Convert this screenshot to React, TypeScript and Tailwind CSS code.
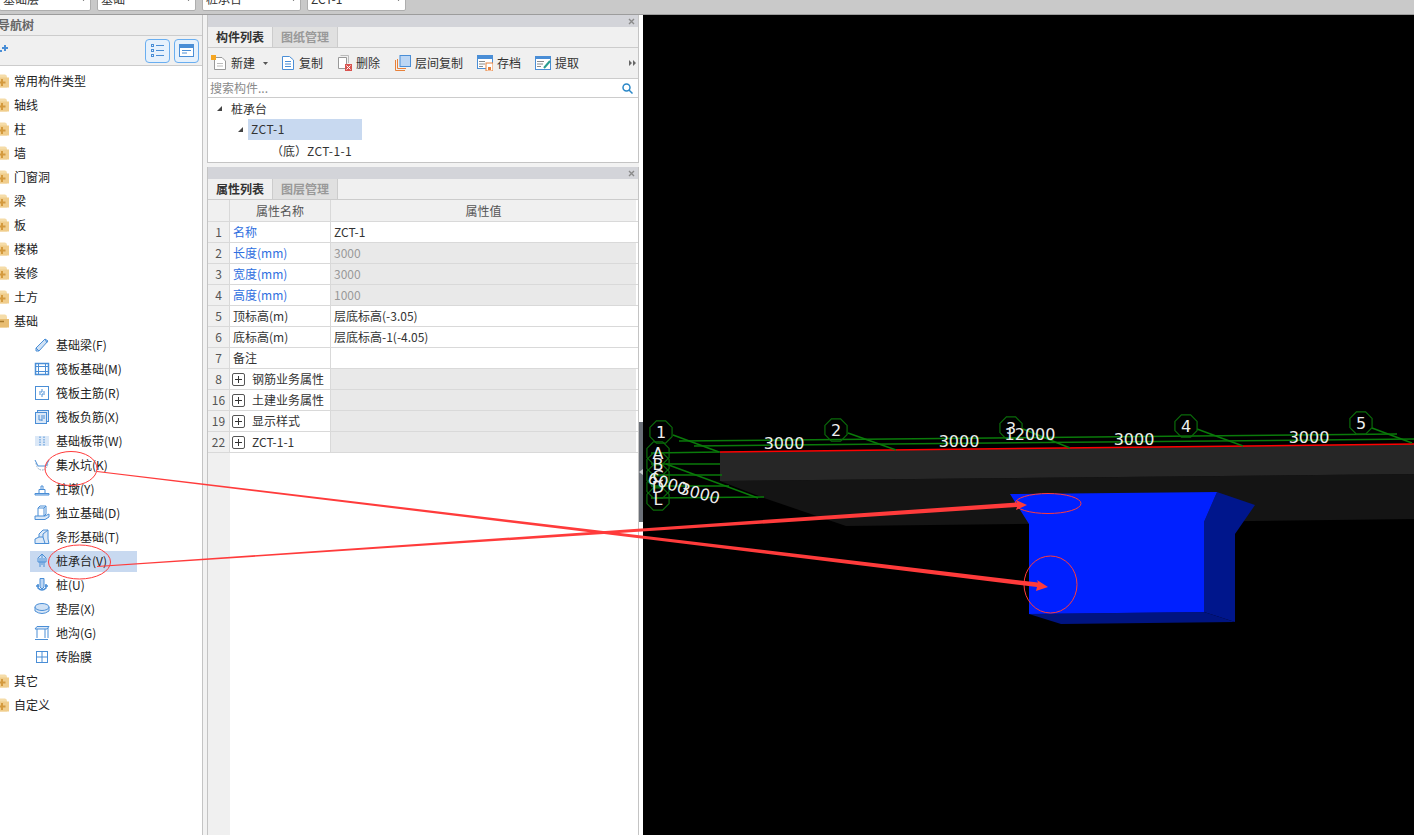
const cnFont = "font-['Noto_Sans_CJK_SC','Noto_Sans',sans-serif]";

function FolderIcon() {
  return (
    <svg width="14" height="14" viewBox="0 0 14 14" className="shrink-0 -ml-[5px]">
      <path d="M1 3 Q1 0.5 3 0.5 H10 Q12 0.5 12 3 V13.5 H1 Z" fill="#f5dca8" />
      <rect x="1" y="3.5" width="13" height="10" fill="#f0cd8c" />
      <path d="M7 5 V12 M3.5 8.5 H10.5" stroke="#d49a3e" strokeWidth="2" />
    </svg>
  );
}

function OpenFolderIcon() {
  return (
    <svg width="14" height="14" viewBox="0 0 14 14" className="shrink-0 -ml-[5px]">
      <path d="M1 3 Q1 0.5 3 0.5 H10 Q12 0.5 12 3 V13.5 H1 Z" fill="#f5dca8" />
      <rect x="1" y="5" width="13" height="8.5" fill="#e8bd72" />
      <path d="M1 7.5 H9" stroke="#a87a2c" strokeWidth="1.5" />
    </svg>
  );
}

const blue = "#4a8ed6";

function ChildIcon({ kind }: { kind: number }) {
  const s = { fill: "none", stroke: blue, strokeWidth: 1 };
  const shapes = [
    <g {...s}>
      <path d="M2 11 L11 2 L14 4 L5 14 L2 14 Z" fill="#cfe1f5" />
      <path d="M2 11 L5 14 M11 2 L13 6" />
    </g>,
    <g {...s}>
      <rect x="1.5" y="2.5" width="13" height="11" strokeWidth="1.5" />
      <rect x="4.5" y="5.5" width="7" height="5" />
      <path d="M1.5 5.5 H14.5 M1.5 10.5 H14.5 M4.5 2.5 V13.5 M11.5 2.5 V13.5" />
    </g>,
    <g {...s}>
      <rect x="1.5" y="1.5" width="13" height="13" />
      <path d="M8 4 V7 H5 M8 12 V9 H11 M5 9 H7 M9 7 H11" />
    </g>,
    <g {...s}>
      <rect x="3.5" y="1.5" width="11" height="11" fill="#dbe8f7" />
      <rect x="1.5" y="3.5" width="11" height="11" fill="#dbe8f7" />
      <path d="M5 6 V11 H8 M8 6 V12 M10 6 V10" />
    </g>,
    <g {...s}>
      <rect x="1" y="3" width="14" height="10" fill="#dbe8f7" stroke="none" />
      <path d="M6 3.5 V12.5 M10 3.5 V12.5" strokeDasharray="1.5 1" />
    </g>,
    <g {...s}>
      <path d="M2 6 Q3 13 8 13 Q13 13 14 6" strokeDasharray="1.5 1" stroke="#8fa9c4" />
      <path d="M1 3 L4 9 H12 L15 3" />
    </g>,
    <g {...s}>
      <path d="M1 12.5 H15 V14 H1 Z" fill="#cfe1f5" />
      <path d="M5 12 V8.5 H11 V12 M7 8 V5 H9 V8" />
    </g>,
    <g {...s}>
      <path d="M1 11 H11 L15 9 V12 L11 14.5 H1 Z" fill="#dbe8f7" />
      <path d="M4 11 V3 L6 1 H12 V9 L10 11 M4 3 H10 V11 M10 3 L12 1" />
    </g>,
    <g {...s}>
      <path d="M1 14.5 V10 L5 8 V5 L9 1 H14 V10 L15 14.5 Z" fill="#dbe8f7" />
      <path d="M5 8 H9 V5 L14 1 M9 8 L11 14.5" />
    </g>,
    <g {...s}>
      <path d="M8 1 L12 5 V9 H4 V5 Z" fill="#cfe1f5" />
      <path d="M6 5 V14 M10 5 V14 M8 1 V12" />
    </g>,
    <g {...s}>
      <path d="M6 1.5 H10 V10 L8 12 L6 10 Z" fill="#bcd6f4" />
      <path d="M2 9 H5 M11 9 H14 M4 7 V11 Q8 15 12 11 V7" strokeWidth="1.5" />
    </g>,
    <g {...s}>
      <path d="M1 6 V10 Q8 15 15 10 V6" fill="#dbe8f7" />
      <ellipse cx="8" cy="6" rx="7" ry="3.5" fill="#cfe1f5" />
    </g>,
    <g {...s}>
      <path d="M3 1.5 H15 L13 4 H1 Z" fill="#dbe8f7" />
      <path d="M3 4 V13 M11 4 V13 M1 14.5 H14 M14 3 V13" />
    </g>,
    <g {...s}>
      <rect x="2.5" y="2.5" width="11" height="11" />
      <path d="M8 2.5 V13.5 M2.5 8 H13.5" />
    </g>,
  ];
  return (
    <svg width="16" height="16" viewBox="0 0 16 16" className="shrink-0">
      {shapes[kind]}
    </svg>
  );
}

function NavRow({ label, open }: { label: string; open?: boolean }) {
  return (
    <div className="flex h-6 items-center gap-[5px] text-xs text-[#222]">
      {open ? <OpenFolderIcon /> : <FolderIcon />}
      <span>{label}</span>
    </div>
  );
}

const topNodes = ["常用构件类型", "轴线", "柱", "墙", "门窗洞", "梁", "板", "楼梯", "装修", "土方"];
const children = [
  "基础梁(F)",
  "筏板基础(M)",
  "筏板主筋(R)",
  "筏板负筋(X)",
  "基础板带(W)",
  "集水坑(K)",
  "柱墩(Y)",
  "独立基础(D)",
  "条形基础(T)",
  "桩承台(V)",
  "桩(U)",
  "垫层(X)",
  "地沟(G)",
  "砖胎膜",
];

function NavTree() {
  return (
    <aside className="w-[203px] shrink-0 border-r border-[#c4c4c4] bg-white flex flex-col overflow-hidden">
      <div className="h-[21px] bg-[#eeeeee] border-b border-[#cccccc] flex items-center text-xs font-bold text-[#666]">
        <span className="-ml-[2px]">导航树</span>
      </div>
      <div className="h-[30px] bg-[#f0f0f0] border-b border-[#cccccc] flex items-center justify-end gap-[4px] pr-[3px] relative">
        <svg width="9" height="8" viewBox="0 0 9 8" className="absolute left-0 top-[8px]">
          <path d="M2 4 H8 M5 1 V7" stroke="#4a8ed6" strokeWidth="2" />
          <rect x="0" y="6" width="2" height="2" fill="#4a8ed6" />
        </svg>
        <div className="w-[25px] h-[24px] rounded-[4px] border border-[#69aef0] bg-[#e6f1fc] flex items-center justify-center">
          <svg width="14" height="13" viewBox="0 0 14 13" fill="none" stroke="#4a8ed6">
            <rect x="0.5" y="0.5" width="2" height="2" />
            <rect x="0.5" y="5.5" width="2" height="2" />
            <rect x="0.5" y="10.5" width="2" height="2" />
            <path d="M5 1.5 H13 M5 6.5 H13 M5 11.5 H13" />
          </svg>
        </div>
        <div className="w-[25px] h-[24px] rounded-[4px] border border-[#69aef0] bg-[#e6f1fc] flex items-center justify-center">
          <svg width="15" height="13" viewBox="0 0 15 13">
            <rect x="0.5" y="0.5" width="14" height="12" fill="#fff" stroke="#4a8ed6" />
            <rect x="0" y="0" width="15" height="4" fill="#4a8ed6" />
            <path d="M3 6.5 H12 M3 9 H8" stroke="#4a8ed6" />
          </svg>
        </div>
      </div>
      <div className="pt-[3px] flex flex-col">
        {topNodes.map((n) => (
          <NavRow key={n} label={n} />
        ))}
        <NavRow label="基础" open />
        {children.map((c, i) => (
          <div key={c} className="h-6 flex items-center relative text-xs text-[#222]">
            <div
              className={`flex items-center gap-[6px] h-[21px] pl-[4px] ml-[30px] w-[107px] ${
                i === 9 ? "bg-[#c8d9f0]" : ""
              }`}
            >
              <ChildIcon kind={i} />
              <span className="whitespace-nowrap">{c}</span>
            </div>
          </div>
        ))}
        <NavRow label="其它" />
        <NavRow label="自定义" />
      </div>
    </aside>
  );
}

function PanelHead({ tabs }: { tabs: string[] }) {
  return (
    <>
      <div className="h-[12px] bg-[#d3d4d9] flex items-center justify-end pr-[3px]">
        <svg width="7" height="7" viewBox="0 0 7 7" stroke="#8a8a8a" strokeWidth="1.4">
          <path d="M1 1 L6 6 M6 1 L1 6" />
        </svg>
      </div>
      <div className="h-[21px] flex border-b border-[#cccccc] bg-[#f0f0f0] text-xs">
        <div className="w-[65px] bg-[#f0f0f0] border-r border-[#cccccc] flex items-center justify-center font-bold text-[#333]">
          {tabs[0]}
        </div>
        <div className="w-[65px] bg-[#e0e0e0] border-r border-[#cccccc] flex items-center justify-center font-bold text-[#999]">
          {tabs[1]}
        </div>
      </div>
    </>
  );
}

function ToolIcon({ kind }: { kind: number }) {
  if (kind === 0)
    return (
      <svg width="16" height="16" viewBox="0 0 16 16" className="shrink-0">
        <path d="M3.5 2.5 H11 L14.5 6 V14.5 H3.5 Z" fill="#fff" stroke="#999" />
        <path d="M6 8.5 H12 M6 11 H12" stroke="#bbb" />
        <rect x="0" y="0" width="5" height="5" fill="#f5a623" />
      </svg>
    );
  if (kind === 1)
    return (
      <svg width="14" height="16" viewBox="0 0 14 16" className="shrink-0">
        <path d="M1.5 1.5 H8.5 L12.5 5 V14.5 H1.5 Z" fill="#fff" stroke="#4a8ed6" />
        <path d="M4 6.5 H10 M4 9 H10 M4 11.5 H10" stroke="#4a8ed6" />
      </svg>
    );
  if (kind === 2)
    return (
      <svg width="15" height="16" viewBox="0 0 15 16" className="shrink-0">
        <path d="M1.5 2.5 H9.5 V13.5 H1.5 Z" fill="#fff" stroke="#999" />
        <path d="M3.5 0.5 H11.5 V8" fill="none" stroke="#bbb" />
        <rect x="8" y="9" width="7" height="7" fill="#d9534f" />
        <path d="M9.5 10.5 L13.5 14.5 M13.5 10.5 L9.5 14.5" stroke="#fff" />
      </svg>
    );
  if (kind === 3)
    return (
      <svg width="16" height="16" viewBox="0 0 16 16" className="shrink-0">
        <path d="M0.5 15.5 V5 M0.5 15.5 H10 M2.5 13.5 V4 M2.5 13.5 H11" stroke="#e8813a" fill="none" />
        <rect x="5" y="0.5" width="10.5" height="11" fill="#bcd6f4" stroke="#4a8ed6" />
      </svg>
    );
  if (kind === 4)
    return (
      <svg width="16" height="16" viewBox="0 0 16 16" className="shrink-0">
        <rect x="0.5" y="0.5" width="15" height="13" fill="#fff" stroke="#4a8ed6" />
        <rect x="0" y="0" width="16" height="4" fill="#4a8ed6" />
        <path d="M2 6.5 H8 M2 9 H8 M2 11.5 H6" stroke="#8a8a8a" />
        <rect x="9" y="8" width="7" height="8" fill="#fff" stroke="#e8813a" />
        <rect x="11" y="12" width="3" height="3" fill="#e8813a" />
      </svg>
    );
  return (
    <svg width="16" height="16" viewBox="0 0 16 16" className="shrink-0">
      <rect x="0.5" y="1.5" width="15" height="13" fill="#fff" stroke="#4a8ed6" />
      <rect x="0" y="1" width="16" height="3" fill="#4a8ed6" />
      <path d="M2 6.5 H9 M2 9 H8 M2 11.5 H6" stroke="#8a8a8a" />
      <path d="M9 13 L15 6" stroke="#2a9d8f" strokeWidth="2" />
    </svg>
  );
}

const tools = [
  { label: "新建", ml: "ml-[3px]" },
  { label: "复制", ml: "ml-[26px]" },
  { label: "删除", ml: "ml-[14px]" },
  { label: "层间复制", ml: "ml-[15px]" },
  { label: "存档", ml: "ml-[14px]" },
  { label: "提取", ml: "ml-[14px]" },
];

function Toolbar() {
  return (
    <div className="h-[31px] pb-[1px] bg-[#f0f0f0] border-b border-[#cccccc] flex items-center text-xs text-[#333] relative">
      {tools.map((t, i) => (
        <div key={t.label} className={`flex items-center gap-[4px] ${t.ml}`}>
          <ToolIcon kind={i} />
          <span>{t.label}</span>
          {i === 0 && (
            <svg width="5" height="3" viewBox="0 0 5 3" className="absolute left-[55px] top-[14px]">
              <path d="M0 0 H5 L2.5 3 Z" fill="#555" />
            </svg>
          )}
        </div>
      ))}
      <svg width="7" height="6" viewBox="0 0 7 6" className="absolute right-[2px] top-[12px]">
        <path d="M0 0 L3 3 L0 6 Z M4 0 L7 3 L4 6 Z" fill="#666" />
      </svg>
    </div>
  );
}

function SearchRow() {
  return (
    <div className="h-[19px] bg-white border-b border-[#cccccc] flex items-center justify-between pl-[2px] pr-[5px] text-xs text-[#8a8a8a]">
      <span>搜索构件...</span>
      <svg width="11" height="11" viewBox="0 0 11 11" fill="none" stroke="#2b88c8" strokeWidth="1.5">
        <circle cx="4.5" cy="4.5" r="3.5" />
        <path d="M7 7 L10.5 10.5" />
      </svg>
    </div>
  );
}

function Arrow() {
  return (
    <svg width="5" height="5" viewBox="0 0 5 5" className="shrink-0">
      <path d="M5 0 V5 H0 Z" fill="#444" />
    </svg>
  );
}

function CompTree() {
  return (
    <div className="h-[64px] bg-white text-xs text-[#333] flex flex-col">
      <div className="h-[21px] flex items-center pl-[9px] gap-[9px]">
        <Arrow />
        <span>桩承台</span>
      </div>
      <div className="h-[21px] flex items-center pl-[30px]">
        <Arrow />
        <div className="ml-[5px] w-[114px] h-[21px] pb-[1px] bg-[#c8d9f0] flex items-center pl-[3px] tracking-[0.5px]">
          ZCT-1
        </div>
      </div>
      <div className="h-[21px] flex items-center pl-[63px]">
        （底）<span className="tracking-[0.4px]">ZCT-1-1</span>
      </div>
    </div>
  );
}

type Row = { no: string; name: string; value?: string; kind: "plain" | "grey" | "group"; blue?: boolean };

const rows: Row[] = [
  { no: "1", name: "名称", value: "ZCT-1", kind: "plain", blue: true },
  { no: "2", name: "长度(mm)", value: "3000", kind: "grey", blue: true },
  { no: "3", name: "宽度(mm)", value: "3000", kind: "grey", blue: true },
  { no: "4", name: "高度(mm)", value: "1000", kind: "grey", blue: true },
  { no: "5", name: "顶标高(m)", value: "层底标高(-3.05)", kind: "plain" },
  { no: "6", name: "底标高(m)", value: "层底标高-1(-4.05)", kind: "plain" },
  { no: "7", name: "备注", value: "", kind: "plain" },
  { no: "8", name: "钢筋业务属性", kind: "group" },
  { no: "16", name: "土建业务属性", kind: "group" },
  { no: "19", name: "显示样式", kind: "group" },
  { no: "22", name: "ZCT-1-1", kind: "group" },
];

function PropRow({ row }: { row: Row }) {
  return (
    <div className="flex h-[21px] border-b border-[#d9d9d9] text-xs">
      <div className="w-[22px] shrink-0 bg-[#f0f0f0] border-r border-[#d9d9d9] flex items-center justify-center text-[#555]">
        {row.no}
      </div>
      <div className="w-[101px] shrink-0 bg-white border-r border-[#d9d9d9] flex items-center pl-[2px] whitespace-nowrap">
        {row.kind === "group" && (
          <span className="w-[13px] h-[13px] mr-[6px] border border-[#555] rounded-[2px] flex items-center justify-center">
            <svg width="7" height="7" viewBox="0 0 7 7" stroke="#333">
              <path d="M3.5 0 V7 M0 3.5 H7" />
            </svg>
          </span>
        )}
        <span className={row.blue ? "text-[#2f6fe0] pl-[1px]" : "text-[#333] pl-[1px]"}>{row.name}</span>
      </div>
      <div
        className={`w-[305px] shrink-0 flex items-center pl-[3px] ${
          row.kind === "plain" ? "bg-white text-[#333]" : "bg-[#e9e9e9] text-[#999]"
        }`}
      >
        {row.value}
      </div>
    </div>
  );
}

function PropTable() {
  return (
    <div className="flex-1 flex flex-col bg-white relative">
      <div className="flex h-[22px] border-b border-[#d9d9d9] text-xs text-[#555]">
        <div className="w-[22px] shrink-0 bg-[#f0f0f0] border-r border-[#d9d9d9]" />
        <div className="w-[101px] shrink-0 bg-[#f0f0f0] border-r border-[#d9d9d9] flex items-center justify-center">
          属性名称
        </div>
        <div className="w-[305px] shrink-0 bg-[#f0f0f0] flex items-center justify-center">属性值</div>
      </div>
      {rows.map((r) => (
        <PropRow key={r.no} row={r} />
      ))}
      <div className="flex-1 flex">
        <div className="w-[22px] bg-[#f0f0f0]" />
      </div>
    </div>
  );
}

function Splitter() {
  return (
    <div className="w-[4px] shrink-0 bg-white flex flex-col">
      <div className="h-[407px]" />
      <div className="h-[100px] bg-[#6b7078] flex items-center justify-center">
        <svg width="4" height="6" viewBox="0 0 4 6">
          <path d="M4 0 V6 L0 3 Z" fill="#c9ccd1" />
        </svg>
      </div>
    </div>
  );
}

function Octagon({ cx, cy, r = 12 }: { cx: number; cy: number; r?: number }) {
  const pts = Array.from({ length: 8 }, (_, i) => {
    const a = (Math.PI / 4) * i + Math.PI / 8;
    return `${cx + r * Math.cos(a)},${cy + r * Math.sin(a)}`;
  }).join(" ");
  return <polygon points={pts} fill="none" stroke="#0a6b0a" strokeWidth="1.2" />;
}

const green = "#0a7a0a";
const greenLines = [
  [679, 440, 1397, 433],
  [694, 445, 1414, 438],
  [651, 452, 720, 451],
  [651, 463, 720, 463],
  [651, 474, 722, 474],
  [651, 485, 729, 485],
  [651, 497, 764, 496],
  [673, 434, 719, 451],
  [848, 432, 896, 449],
  [1023, 428, 1070, 447],
  [1197, 428, 1243, 445],
  [1372, 427, 1412, 442],
  [666, 463, 758, 497],
];

function Scene() {
  const dims = [
    { x: 784, y: 448, t: "3000" },
    { x: 959, y: 446, t: "3000" },
    { x: 1134, y: 444, t: "3000" },
    { x: 1309, y: 442, t: "3000" },
    { x: 1030, y: 439, t: "12000" },
  ];
  const tops = [
    { x: 661, y: 431, t: "1" },
    { x: 836, y: 429, t: "2" },
    { x: 1011, y: 427, t: "3" },
    { x: 1186, y: 425, t: "4" },
    { x: 1361, y: 422, t: "5" },
  ];
  const lefts = [
    { y: 452, t: "A" },
    { y: 463, t: "B" },
    { y: 475, t: "C" },
    { y: 486, t: "D" },
    { y: 498, t: "L" },
  ];
  const font = "'DejaVu Sans', sans-serif";
  return (
    <div className="flex-1 bg-black">
      <svg width="771" height="821" viewBox="643 14 771 821" className="block">
        <polygon points="720,480 1414,473 1414,518 846,525 764,497" fill="#141414" />
        <polygon points="720,451 1414,443 1414,473 720,480" fill="#262626" />
        <line x1="720" y1="451" x2="1414" y2="443" stroke="#ff0000" strokeWidth="1.5" />
        {greenLines.map((l, i) => (
          <line key={i} x1={l[0]} y1={l[1]} x2={l[2]} y2={l[3]} stroke={green} strokeWidth="1.5" />
        ))}
        <polygon points="1029,613 1204,611 1235,621 1061,623" fill="#001480" />
        <polygon points="1217,491 1255,504 1235,533 1235,621 1204,611 1204,521" fill="#00168c" />
        <polygon points="1010,493 1217,491 1204,521 1204,611 1029,613 1029,523" fill="#0020ff" />
        {tops.map((c) => (
          <Octagon key={c.t} cx={c.x} cy={c.y} />
        ))}
        {lefts.map((c) => (
          <Octagon key={c.t} cx={658} cy={c.y} />
        ))}
        {tops.map((c) => (
          <text key={c.t} x={c.x} y={c.y + 6} textAnchor="middle" fontFamily={font} fontSize="16" fill="#eee">
            {c.t}
          </text>
        ))}
        {lefts.map((c) => (
          <text key={c.t} x={658} y={c.y + 6} textAnchor="middle" fontFamily={font} fontSize="16" fill="#eee">
            {c.t}
          </text>
        ))}
        {dims.map((d) => (
          <text key={d.x} x={d.x} y={d.y} textAnchor="middle" fontFamily={font} fontSize="16" fill="#eee">
            {d.t}
          </text>
        ))}
        <text x="668" y="488" textAnchor="middle" fontFamily={font} fontSize="16" fill="#eee" transform="rotate(18 668 482)">
          6000
        </text>
        <text x="700" y="498" textAnchor="middle" fontFamily={font} fontSize="16" fill="#eee" transform="rotate(15 700 492)">
          3000
        </text>
      </svg>
    </div>
  );
}

// red markup drawn over the screenshot, in page coordinates
function Markup() {
  const c = "#ff3b3b";
  return (
    <svg width="1414" height="835" viewBox="0 0 1414 835" className="absolute inset-0 pointer-events-none">
      <ellipse cx="71" cy="468.5" rx="26" ry="17" fill="none" stroke={c} />
      <ellipse cx="79.5" cy="562" rx="31" ry="17" fill="none" stroke={c} />
      <ellipse cx="1048" cy="503.5" rx="33" ry="10" fill="none" stroke={c} />
      <ellipse cx="1050.5" cy="584.5" rx="26.5" ry="28.5" fill="none" stroke={c} />
      <polygon points="97,471 1038,582.5 1037,580 1048,587 1036,591 1037,587 97,472" fill={c} />
      <polygon points="97,566 1017,502.5 1016,500 1027,505 1016,510 1017,507 97,567" fill={c} />
    </svg>
  );
}

function TopSelect({ text, w }: { text: string; w: string }) {
  return (
    <div
      className={`${w} h-[24px] -mt-[13px] bg-white border border-[#aeaeae] rounded-b-[2px] flex items-center justify-between pl-[3px] pr-[4px] text-xs text-[#333]`}
    >
      <span className="whitespace-nowrap">{text}</span>
      <svg width="5" height="3" viewBox="0 0 5 3">
        <path d="M0 0 H5 L2.5 3 Z" fill="#555" />
      </svg>
    </div>
  );
}

export default function App() {
  return (
    <div className={`relative w-screen h-screen overflow-hidden bg-[#f2f2f2] flex flex-col ${cnFont}`}>
      <header className="h-[15px] shrink-0 bg-[#c9c9c9] border-b border-[#9c9c9c] flex gap-[6px] overflow-hidden">
        <TopSelect text="基础层" w="w-[92px] -ml-[1px]" />
        <TopSelect text="基础" w="w-[99px]" />
        <TopSelect text="桩承台" w="w-[99px]" />
        <TopSelect text="ZCT-1" w="w-[99px]" />
      </header>
      <div className="flex-1 flex min-h-0">
        <NavTree />
        <main className="w-[432px] ml-[4px] shrink-0 flex flex-col gap-[4px] bg-[#f2f2f2]">
          <section className="h-[148px] border-x border-b border-[#c4c4c4] flex flex-col">
            <PanelHead tabs={["构件列表", "图纸管理"]} />
            <Toolbar />
            <SearchRow />
            <CompTree />
          </section>
          <section className="flex-1 border-x border-[#c4c4c4] flex flex-col min-h-0">
            <PanelHead tabs={["属性列表", "图层管理"]} />
            <PropTable />
          </section>
        </main>
        <Splitter />
        <Scene />
      </div>
      <Markup />
    </div>
  );
}
